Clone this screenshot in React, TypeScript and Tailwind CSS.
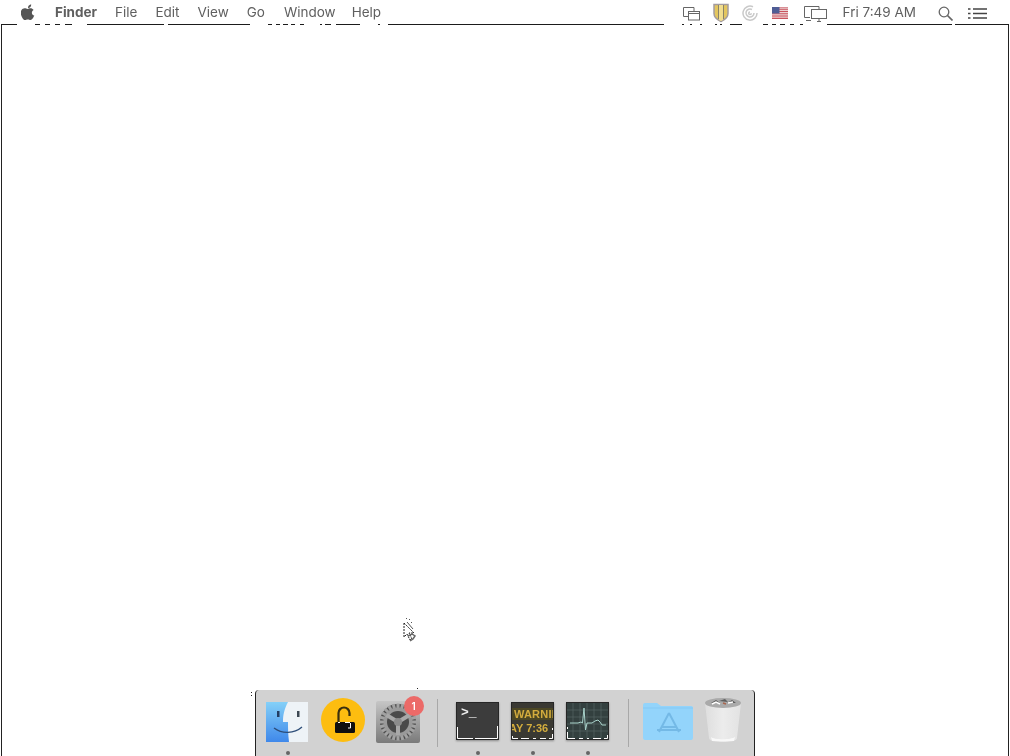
import React from "react";

const font = { fontFamily: '"Inter", "Liberation Sans", sans-serif' };

function Apple() {
  return (
    <svg width="14" height="16" viewBox="0 0 14 16" className="-mt-[2px] text-[#555]" fill="currentColor">
      <path d="M10.2 0.4c.1 1-.3 1.9-.8 2.6-.6.7-1.5 1.2-2.4 1.1-.1-.9.3-1.9.8-2.5C8.4.9 9.4.4 10.2.4zM13.3 11.6c-.4.9-.6 1.3-1.1 2.1-.7 1.1-1.6 2.3-2.8 2.3-1 0-1.3-.6-2.6-.6s-1.7.6-2.7.6c-1.2 0-2-1.1-2.7-2.1C-.5 11-.7 7.9.4 6.2 1.2 5 2.4 4.3 3.6 4.3s2 .7 3 .7 1.6-.7 3-.7c1 0 2.2.6 3 1.6-2.6 1.400-2.200 5.100.700 5.700z" />
    </svg>
  );
}

function MenuItem({ label, bold, className }: { label: string; bold?: boolean; className: string }) {
  return <span className={`text-[13.5px] leading-none text-[#5f5f5f] ${bold ? "font-bold" : ""} ${className}`}>{label}</span>;
}

function Windows() {
  return (
    <svg width="18" height="15" viewBox="0 0 18 15" fill="none" stroke="#666" strokeWidth="1">
      <path d="M7 10.500H1.500V1.500H12V5" />
      <rect x="6.500" y="5.500" width="11" height="8.500" fill="#fff" />
      <path d="M6.500 7.500h11" />
    </svg>
  );
}

function Shield() {
  return (
    <svg width="16" height="20" viewBox="0 0 16 20">
      <path d="M1 1.500h14v9c0 4-3.500 6.500-7 8-3.500-1.500-7-4-7-8z" fill="#e4c65e" stroke="#a39ca0" strokeWidth="1.500" />
      <path d="M5.500 2v14M10.500 2v14" stroke="#8a8367" strokeWidth="1" />
      <path d="M6 2h4v15l-2 1-2-1z" fill="#f1dd8f" />
    </svg>
  );
}

function Spiral() {
  return (
    <svg width="16" height="16" viewBox="0 0 16 16" fill="none" stroke="#c9c9c9" strokeWidth="1.500">
      <path d="M11 1.800A7 7 0 1 0 15 8" />
      <path d="M10 4.500A4 4 0 1 0 12 8" />
      <path d="M8 7a1.300 1.300 0 1 0 1.300 1.300" />
    </svg>
  );
}

function Flag() {
  return (
    <svg width="16" height="12" viewBox="0 0 16 12">
      <rect width="16" height="12" fill="#f4f0f0" />
      <path d="M0 .900h16M0 2.700h16M0 4.500h16M0 6.300h16M0 8.100h16M0 9.900h16M0 11.500h16" stroke="#c9545e" strokeWidth="1" />
      <rect width="7.500" height="6.500" fill="#4f5d95" />
    </svg>
  );
}

function Displays() {
  return (
    <svg width="24" height="17" viewBox="0 0 24 17" fill="none" stroke="#666" strokeWidth="1">
      <path d="M7 12.500H1.500V1.500H16V4.500" />
      <path d="M3 15.500h5" />
      <rect x="8.500" y="4.500" width="15" height="9" fill="#fff" />
      <path d="M14 16.500h4M16 13.500v3" />
    </svg>
  );
}

function Search() {
  return (
    <svg width="15" height="15" viewBox="0 0 15 15" fill="none" stroke="#666" strokeWidth="1.300">
      <circle cx="6" cy="6" r="4.800" />
      <path d="M9.500 9.500l5 5" strokeWidth="1.700" />
    </svg>
  );
}

function ListIcon() {
  return (
    <svg width="19" height="11" viewBox="0 0 19 11" stroke="#444" strokeWidth="1.400">
      <path d="M5 1h14M5 5.500h14M5 10h14" />
      <path d="M0 1h2.500M0 5.500h2.500M0 10h2.500" strokeWidth="1.600" />
    </svg>
  );
}

function BrokenLine() {
  const segments = [
    [1, 17], [35, 40], [45, 50], [55, 60], [65, 72], [87, 92], [92, 128], [128, 164], [168, 220], [220, 250],
    [268, 272], [276, 280], [283, 288], [291, 295], [300, 304], [320, 322], [325, 331], [336, 360], [378, 380], [388, 664],
    [682, 684], [690, 692], [700, 702], [715, 717], [720, 722], [730, 742], [763, 768], [772, 776], [780, 785], [790, 794], [800, 803],
    [827, 952], [955, 1009],
  ];
  const d = segments.map(([a, b]) => `M${a} .5H${b}`).join("");
  return (
    <svg width="1010" height="1" viewBox="0 0 1010 1" className="block shrink-0">
      <path d={d} stroke="#1b1b1b" strokeWidth="1" />
    </svg>
  );
}

function Glitch({ d }: { d: string }) {
  return (
    <svg width="42" height="36" viewBox="0 0 42 36" className="absolute left-0 top-0">
      <path d={d} fill="none" stroke="#fff" strokeWidth="1" />
    </svg>
  );
}

function FinderIcon() {
  return (
    <svg width="44" height="42" viewBox="0 0 44 42">
      <defs>
        <linearGradient id="fl" x1="0" y1="0" x2="0" y2="1">
          <stop offset="0" stopColor="#84d0f8" />
          <stop offset="1" stopColor="#3f88ea" />
        </linearGradient>
      </defs>
      <rect x="1" y="1" width="42" height="40" fill="#eef3f7" />
      <path d="M1 1h22c-4 8-5 13-5 20h5c0 6 0 12 1 20H1z" fill="url(#fl)" />
      <path d="M9 27c8 6 20 6 28-1" fill="none" stroke="#2d4d78" strokeWidth="1.300" />
      <rect x="12" y="10" width="2.500" height="6" fill="#233d61" />
      <rect x="32" y="10" width="2.500" height="6" fill="#3d4853" />
    </svg>
  );
}

function LockIcon() {
  return (
    <svg width="46" height="46" viewBox="0 0 46 46">
      <circle cx="23" cy="23" r="22" fill="#fdbd10" />
      <path d="M18.500 25v-9a5.500 5.500 0 0 1 11 0v3" fill="none" stroke="#3a300f" strokeWidth="2.200" />
      <rect x="15" y="25" width="20" height="11" rx="1.500" fill="#0f0f0f" />
      <path d="M18 25.500h2M25 25.500h5M30.500 26v5H28" stroke="#fff" strokeWidth="1" fill="none" />
    </svg>
  );
}

function GearIcon() {
  const teeth = Array.from({ length: 24 }, (_, i) => i * 15);
  return (
    <div className="relative h-[42px] w-[44px]">
      <svg width="44" height="42" viewBox="0 0 44 42">
        <defs>
          <linearGradient id="gb" x1="0" y1="0" x2="0" y2="1">
            <stop offset="0" stopColor="#c6c6c6" />
            <stop offset="1" stopColor="#7a7a7a" />
          </linearGradient>
        </defs>
        <rect x="0" y="0" width="44" height="42" rx="2" fill="url(#gb)" />
        <circle cx="22" cy="21" r="18" fill="#4f4f4f" />
        {teeth.map((a) => (
          <rect key={a} x="20.500" y="2.500" width="3" height="5" fill="#a2a2a2" transform={`rotate(${a} 22 21)`} />
        ))}
        <circle cx="22" cy="21" r="14.500" fill="#9a9a9a" />
        <circle cx="22" cy="21" r="11" fill="#4a4a4a" />
        <path d="M22 21L10.500 14M22 21L33.500 14M22 21V34" stroke="#a8a8a8" strokeWidth="4" />
        <circle cx="22" cy="21" r="4" fill="#8c8c8c" />
      </svg>
      <span className="absolute -right-[4px] -top-[5px] flex h-[20px] w-[20px] items-center justify-center rounded-full bg-[#ec6a68] text-[10px] font-semibold text-white">
        1
      </span>
    </div>
  );
}

function TerminalIcon() {
  return (
    <div className="relative mt-[2px] h-[38px] w-[43px] overflow-hidden border border-[#262626] bg-[#3c3c3c] shadow-[0_1px_2px_rgba(0,0,0,0.35)]">
      <span className="absolute left-[4px] top-[3px] text-[13px] font-bold leading-[14px] text-[#eee]" style={{ fontFamily: '"Liberation Mono", monospace' }}>
        &gt;_
      </span>
      <Glitch d="M.5 24v11.500H16M18 35.500h22.500V23" />
    </div>
  );
}

function ConsoleIcon() {
  return (
    <div className="relative mt-[2px] h-[38px] w-[43px] overflow-hidden border border-[#262626] bg-[#3a3933] font-bold shadow-[0_1px_2px_rgba(0,0,0,0.35)]" style={{ fontFamily: '"Liberation Sans", sans-serif' }}>
      <div className="absolute left-0 right-0 top-[5px] h-[12px] bg-[#4c4724]" />
      <span className="absolute left-[2px] top-[6px] whitespace-nowrap text-[11px] leading-none tracking-[0.2px] text-[#d3ac3d]">WARNIN</span>
      <span className="absolute -left-[3px] top-[20px] whitespace-nowrap text-[11px] leading-none text-[#d3ac3d]">AY 7:36</span>
      <Glitch d="M.5 33v2.500H6M9 35.500h8M21 35.500h3M28 35.500h6M37 35.500h3.500V31M40.500 25v2" />
    </div>
  );
}

function MonitorIcon() {
  return (
    <div className="relative mt-[2px] h-[38px] w-[43px] overflow-hidden border border-[#262626] bg-[#33403f] shadow-[0_1px_2px_rgba(0,0,0,0.35)]">
      <svg width="42" height="36" viewBox="0 0 42 36" className="absolute left-0 top-0">
        <path d="M0 7h42M0 14h42M0 21h42M0 28h42M6 0v36M13 0v36M20 0v36M27 0v36M34 0v36" stroke="#5c6a68" strokeWidth="0.600" />
        <path d="M3 20h8l3-1 1.500 1L17 5l1.500 22 1.500-7h5l3-2 3-1 2 2 2 3h4" fill="none" stroke="#a9d3cb" strokeWidth="1" />
      </svg>
      <Glitch d="M.5 24v2M.5 29v6.500H8M12 35.500h4M20 35.500h2M26 35.500h8M37 35.500h3.500V32" />
    </div>
  );
}

function FolderIcon() {
  return (
    <svg width="50" height="38" viewBox="0 0 50 38" className="mt-[3px]">
      <path d="M0 2a2 2 0 0 1 2-2h12l4 3h30a2 2 0 0 1 2 2v30a2 2 0 0 1-2 2H2a2 2 0 0 1-2-2z" fill="#93d4fb" />
      <path d="M0 5h50" stroke="#84c9f5" strokeWidth="1" />
      <path d="M26 10L16 29M26 10l10 19M19 24h14M14 27h24" fill="none" stroke="#74b9e6" strokeWidth="2" />
    </svg>
  );
}

function TrashIcon() {
  return (
    <svg width="38" height="46" viewBox="0 0 38 46">
      <defs>
        <linearGradient id="tr" x1="0" y1="0" x2="1" y2="0">
          <stop offset="0" stopColor="#dedede" />
          <stop offset="0.500" stopColor="#ececec" />
          <stop offset="1" stopColor="#e2e2e2" />
        </linearGradient>
      </defs>
      <path d="M1 6l4 35c0 3 7 4 14 4s14-1 14-4l4-35z" fill="url(#tr)" />
      <path d="M7 40c3 3 20 3 24 0l-1 4H8z" fill="#f8f8f8" />
      <ellipse cx="19" cy="6" rx="18" ry="5" fill="#aaaaaa" />
      <path d="M7 6l5-3 4 3zM15 4l6-2 3 3zM23 6l5-3 4 3z" fill="#5e5e5e" />
      <path d="M8 7l4-2 4 2M24 6l5-1" stroke="#fff" strokeWidth="1.500" fill="none" />
      <path d="M19 6l3 1" stroke="#a8654d" strokeWidth="1.500" />
    </svg>
  );
}

function DockSlot({ children, dot }: { children: React.ReactNode; dot?: boolean }) {
  return (
    <div className="flex h-full flex-col items-center">
      <div className="flex h-[60px] w-[55px] items-center justify-center blur-[0.4px]">{children}</div>
      {dot && <span className="mt-[1px] h-[4px] w-[4px] rounded-full bg-[#666]" />}
    </div>
  );
}

export default function App() {
  return (
    <div className="relative flex h-[756px] w-[1010px] flex-col overflow-hidden bg-white" style={font}>
      <header className="flex h-[24px] shrink-0 items-center pl-[21px] pr-[23px] pt-[2px]">
        <div className="flex items-center blur-[0.3px]">
          <Apple />
          <MenuItem label="Finder" bold className="ml-[20px]" />
          <MenuItem label="File" className="ml-[18px]" />
          <MenuItem label="Edit" className="ml-[18px]" />
          <MenuItem label="View" className="ml-[18px]" />
          <MenuItem label="Go" className="ml-[18px]" />
          <MenuItem label="Window" className="ml-[19px]" />
          <MenuItem label="Help" className="ml-[16px]" />
        </div>
        <div className="ml-auto flex items-center blur-[0.3px]">
          <Windows />
          <div className="ml-[13px]"><Shield /></div>
          <div className="ml-[13px]"><Spiral /></div>
          <div className="ml-[14px]"><Flag /></div>
          <div className="ml-[15px]"><Displays /></div>
          <span className="ml-[16px] text-[13.5px] leading-none text-[#5f5f5f]">Fri 7:49 AM</span>
          <div className="ml-[22px]"><Search /></div>
          <div className="ml-[15px]"><ListIcon /></div>
        </div>
      </header>
      <BrokenLine />

      <main className="mx-[1px] flex flex-1 flex-col justify-end border-x border-[#222]">
        <div className="mx-auto flex h-[66px] w-[500px] items-start rounded-tl-[4px] rounded-tr-[4px] border-x border-[#222] bg-[#d2d2d2] pl-[4px]">
          <DockSlot dot><div className="-ml-[2px] mt-[4px]"><FinderIcon /></div></DockSlot>
          <DockSlot><LockIcon /></DockSlot>
          <DockSlot><div className="mt-[4px]"><GearIcon /></div></DockSlot>
          <div className="mx-[12px] mt-[9px] h-[48px] w-px bg-[#a8a8a8]" />
          <DockSlot dot><TerminalIcon /></DockSlot>
          <DockSlot dot><ConsoleIcon /></DockSlot>
          <DockSlot dot><MonitorIcon /></DockSlot>
          <div className="ml-[13px] mr-[11px] mt-[9px] h-[48px] w-px bg-[#a8a8a8]" />
          <DockSlot><FolderIcon /></DockSlot>
          <DockSlot><TrashIcon /></DockSlot>
        </div>
      </main>

      <span className="absolute left-[251px] top-[692px] h-[1px] w-[1px] bg-[#222]" />
      <span className="absolute left-[251px] top-[695px] h-[1px] w-[1px] bg-[#222]" />
      <span className="absolute left-[417px] top-[688px] h-[1px] w-[1px] bg-[#222]" />

      <svg width="16" height="26" viewBox="0 0 16 26" className="absolute left-[402px] top-[617px]">
        <path d="M2 6v14l3-3 3 6 2-1-3-6h5z" fill="#fff" stroke="#222" strokeWidth="1" strokeDasharray="2 1" />
        <path d="M4 1l1 1M7 2l1 1M9 5l1 1M5 5l6 7" stroke="#555" strokeWidth="1" />
        <path d="M6 19l4-2 3 2-2 3-3 2" fill="none" stroke="#666" strokeWidth="1.500" />
      </svg>
    </div>
  );
}
